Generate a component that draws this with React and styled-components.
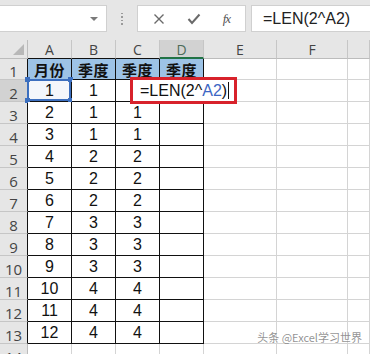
import React from 'react';
import styled, { createGlobalStyle } from 'styled-components';

const GlobalStyle = createGlobalStyle`
  html, body { margin: 0; padding: 0; background: #fff; }
  body { font-family: "Liberation Sans", "Noto Sans CJK SC", sans-serif; }
`;

const Page = styled.div`
  width: 370px;
  height: 354px;
  overflow: hidden;
  position: relative;
  background: #fff;
`;

const FormulaBar = styled.div`
  height: 40px;
  background: #e6e6e6;
  display: flex;
  align-items: flex-start;
  padding-top: 5px;
  box-sizing: border-box;
`;

const NameBox = styled.div`
  width: 107px;
  height: 27px;
  background: #fff;
  border: 1px solid #d0d0d0;
  border-left: none;
  box-sizing: border-box;
  display: flex;
  align-items: center;
  justify-content: flex-end;
  padding-right: 8px;
`;

const Arrow = styled.div`
  width: 0;
  height: 0;
  border-left: 4px solid transparent;
  border-right: 4px solid transparent;
  border-top: 4px solid #7a7a7a;
`;

const Grip = styled.div`
  width: 30px;
  height: 27px;
  display: flex;
  flex-direction: column;
  align-items: center;
  justify-content: center;
  gap: 2px;
  span {
    width: 1.5px;
    height: 1.5px;
    background: #9a9a9a;
  }
`;

const Buttons = styled.div`
  width: 109px;
  height: 27px;
  background: #fff;
  border: 1px solid #d0d0d0;
  box-sizing: border-box;
  display: flex;
  align-items: center;
  justify-content: space-around;
  padding: 0 4px;
  margin-right: 5px;
  color: #6a6a6a;
`;

const Fx = styled.span`
  font-family: "Liberation Serif", serif;
  font-style: italic;
  font-size: 13px;
  color: #555;
  letter-spacing: -1px;
`;

const FormulaInput = styled.div`
  flex: 1;
  height: 27px;
  background: #fff;
  border: 1px solid #d0d0d0;
  border-right: none;
  box-sizing: border-box;
  display: flex;
  align-items: center;
  padding-left: 11px;
  font-size: 16px;
  color: #222;
`;

const Sheet = styled.div`
  display: grid;
  grid-template-columns: 28px 44px 44px 44px 44px 73px 71px 1fr;
  grid-template-rows: 19px 21px repeat(13, 22px);
`;

const Corner = styled.div`
  background: #e6e6e6;
  border-right: 1px solid #bcbcbc;
  border-bottom: 1px solid #bcbcbc;
  box-sizing: border-box;
  position: relative;
  &::after {
    content: '';
    position: absolute;
    right: 3px;
    bottom: 3px;
    width: 0;
    height: 0;
    border-left: 11px solid transparent;
    border-bottom: 11px solid #b8b8b8;
  }
`;

const ColHead = styled.div`
  background: ${(p) => (p.active ? '#d2d2d2' : '#e6e6e6')};
  border-right: 1px solid #c6c6c6;
  border-bottom: ${(p) => (p.active ? '2px solid #217346' : p.boxed ? '1px solid #111' : '1px solid #bcbcbc')};
  box-sizing: border-box;
  display: flex;
  align-items: center;
  justify-content: center;
  font-family: "Open Sans", "Liberation Sans", sans-serif;
  font-size: 14px;
  color: ${(p) => (p.active ? '#4e6b58' : '#444')};
  padding-top: 1px;
`;

const RowHead = styled.div`
  background: ${(p) => (p.active ? '#d2d2d2' : '#e6e6e6')};
  border-bottom: 1px solid #c6c6c6;
  border-right: 1px solid ${(p) => (p.boxed ? '#111' : '#bcbcbc')};
  box-sizing: border-box;
  display: flex;
  align-items: flex-end;
  justify-content: center;
  font-family: "Open Sans", "Liberation Sans", sans-serif;
  font-size: 15px;
  line-height: 1;
  color: #444;
  padding-bottom: 0;
`;

const Cell = styled.div`
  position: relative;
  background: ${(p) => p.bg || '#fff'};
  border-right: 1px solid ${(p) => (p.boxed ? '#111' : '#d4d4d4')};
  border-bottom: 1px solid ${(p) => (p.boxed ? '#111' : '#d4d4d4')};
  box-sizing: border-box;
  display: flex;
  align-items: center;
  justify-content: center;
  font-size: 16px;
  font-weight: ${(p) => (p.bold ? 700 : 400)};
  font-family: ${(p) => (p.bold ? '"Noto Sans CJK SC", sans-serif' : '"Liberation Sans", sans-serif')};
  color: #111;
  ${(p) => p.bold && 'font-size: 15px; letter-spacing: 0.5px;'}
`;

const RefBox = styled.div`
  position: absolute;
  left: -1px;
  top: -1px;
  right: 0;
  bottom: 0;
  border: 2px solid #3c6fbf;
  pointer-events: none;
  i {
    position: absolute;
    width: 5px;
    height: 5px;
    background: #3c6fbf;
  }
`;

const EditBox = styled.div`
  position: absolute;
  left: 14px;
  top: -3px;
  width: 107px;
  height: 27px;
  border: 3px solid #d8222b;
  box-sizing: border-box;
  background: #fff;
  display: flex;
  align-items: center;
  padding-left: 7px;
  font-size: 16px;
  color: #111;
  z-index: 2;
  white-space: nowrap;
`;

const Ref = styled.span`
  color: #3c66c4;
`;

const Caret = styled.span`
  display: inline-block;
  width: 1px;
  height: 17px;
  background: #111;
  margin-left: 1px;
`;

const Watermark = styled.div`
  position: absolute;
  right: 8px;
  bottom: 9px;
  font-family: "Noto Sans CJK SC", sans-serif;
  font-size: 11px;
  color: rgba(110, 110, 110, 0.75);
  text-shadow: 0 0 2px #fff;
`;

const data = [
  [1, 1, ''],
  [2, 1, 1],
  [3, 1, 1],
  [4, 2, 2],
  [5, 2, 2],
  [6, 2, 2],
  [7, 3, 3],
  [8, 3, 3],
  [9, 3, 3],
  [10, 4, 4],
  [11, 4, 4],
  [12, 4, 4],
];

const cols = ['A', 'B', 'C', 'D', 'E', 'F', ''];

export default function App() {
  return (
    <Page>
      <GlobalStyle />
      <FormulaBar>
        <NameBox><Arrow /></NameBox>
        <Grip><span /><span /><span /><span /></Grip>
        <Buttons>
          <svg width="12" height="12" viewBox="0 0 12 12">
            <path d="M1.5 1.5 L10.5 10.5 M10.5 1.5 L1.5 10.5" stroke="#6a6a6a" strokeWidth="1.4" fill="none" />
          </svg>
          <svg width="14" height="12" viewBox="0 0 14 12">
            <path d="M1.5 6 L5 10 L12.5 1.5" stroke="#6a6a6a" strokeWidth="2" fill="none" />
          </svg>
          <Fx>fx</Fx>
        </Buttons>
        <FormulaInput>=LEN(2^A2)</FormulaInput>
      </FormulaBar>
      <Sheet>
        <Corner />
        {cols.map((c, i) => (
          <ColHead key={i} boxed={i < 4} active={c === 'D'}>{c}</ColHead>
        ))}

        <RowHead boxed>1</RowHead>
        <Cell boxed bold bg="#9dc3e6">月份</Cell>
        <Cell boxed bold bg="#9dc3e6">季度</Cell>
        <Cell boxed bold bg="#9dc3e6">季度</Cell>
        <Cell boxed bold bg="#9dc3e6">季度</Cell>
        <Cell /><Cell /><Cell />

        {data.map((r, i) => {
          const row = i + 2;
          return (
            <React.Fragment key={row}>
              <RowHead boxed active={row === 2}>{row}</RowHead>
              <Cell boxed bg={row === 2 ? '#f3f6fb' : undefined}>
                {r[0]}
                {row === 2 && (
                  <RefBox>
                    <i style={{ left: -4, top: -4 }} />
                    <i style={{ right: -4, top: -4 }} />
                    <i style={{ left: -4, bottom: -4 }} />
                    <i style={{ right: -4, bottom: -4 }} />
                  </RefBox>
                )}
              </Cell>
              <Cell boxed>{r[1]}</Cell>
              <Cell boxed>
                {r[2]}
                {row === 2 && (
                  <EditBox>=LEN(2^<Ref>A2</Ref>)<Caret /></EditBox>
                )}
              </Cell>
              <Cell boxed />
              <Cell /><Cell /><Cell />
            </React.Fragment>
          );
        })}

        <RowHead>14</RowHead>
        <Cell /><Cell /><Cell /><Cell /><Cell /><Cell /><Cell />
      </Sheet>
      <Watermark>头条 @Excel学习世界</Watermark>
    </Page>
  );
}
